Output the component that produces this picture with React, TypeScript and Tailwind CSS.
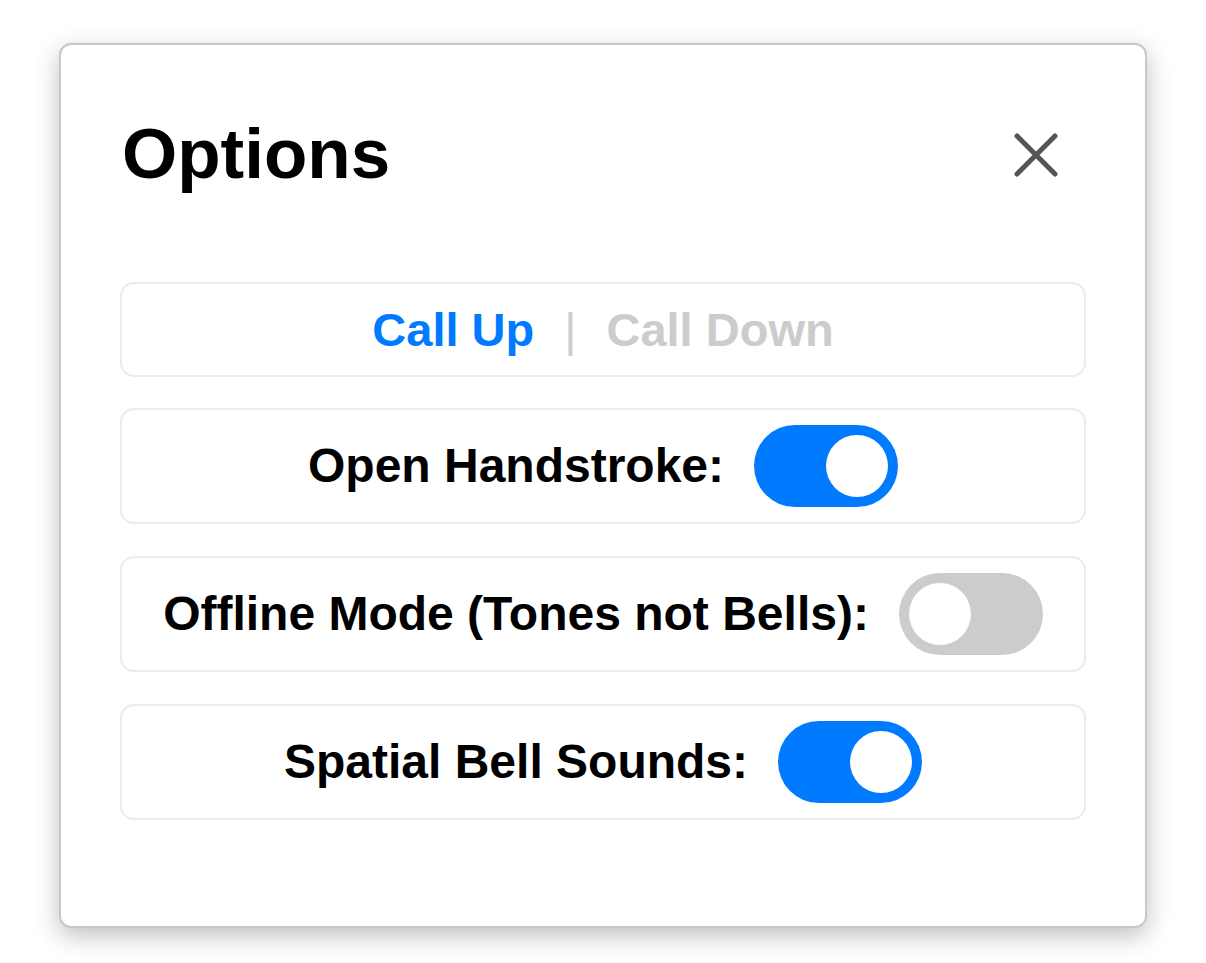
import React, { useState } from 'react';

const font = { fontFamily: '"Liberation Sans", Arial, Helvetica, sans-serif' };

type ToggleProps = { on: boolean; onChange: () => void };

const Toggle: React.FC<ToggleProps> = ({ on, onChange }) => (
  <button
    onClick={onChange}
    className={`flex h-[82px] w-[144px] shrink-0 items-center rounded-full p-[10px] ${
      on ? 'justify-end bg-[#007aff]' : 'justify-start bg-[#cccccc]'
    }`}
  >
    <span className="block h-[62px] w-[62px] rounded-full bg-white" />
  </button>
);

const OptionRow: React.FC<{ label: string; on: boolean; onChange: () => void }> = ({ label, on, onChange }) => (
  <div className="flex items-center justify-center gap-[30px] rounded-[14px] border-2 border-[#ececec] py-[15px]">
    <span className="text-[48px] font-bold leading-none text-black">{label}</span>
    <Toggle on={on} onChange={onChange} />
  </div>
);

const App: React.FC = () => {
  const [callUp, setCallUp] = useState(true);
  const [handstroke, setHandstroke] = useState(true);
  const [offline, setOffline] = useState(false);
  const [spatial, setSpatial] = useState(true);

  return (
    <div className="min-h-[963px] w-full bg-white pt-[43px]" style={font}>
      <div className="mx-auto flex w-[1088px] flex-col rounded-[12px] border-2 border-[#c8c8c8] bg-white px-[59px] pb-[106px] pt-[60px] shadow-[0_8px_24px_rgba(55,60,70,0.32)]">
        {/* header */}
        <div className="flex h-[100px] items-start justify-between">
          <h1 className="mt-[8px] pl-[2px] text-[71px] font-bold leading-[82px] text-black">Options</h1>
          <button className="flex h-[100px] w-[100px] items-center justify-center">
            <svg width="44" height="44" viewBox="0 0 44 44" fill="none" stroke="#555555" strokeWidth="5" strokeLinecap="round">
              <path d="M3 3L41 41M41 3L3 41" />
            </svg>
          </button>
        </div>

        {/* call direction */}
        <div className="mt-[77px] flex h-[95px] items-center justify-center rounded-[14px] border-2 border-[#ececec]">
          <button
            onClick={() => setCallUp(true)}
            className={`text-[47px] font-bold leading-none ${callUp ? 'text-[#007aff]' : 'text-[#cccccc]'}`}
          >
            Call Up
          </button>
          <span className="mx-[30px] text-[47px] font-normal leading-none text-[#cccccc]">|</span>
          <button
            onClick={() => setCallUp(false)}
            className={`text-[47px] font-bold leading-none ${!callUp ? 'text-[#007aff]' : 'text-[#cccccc]'}`}
          >
            Call Down
          </button>
        </div>

        <div className="mt-[31px] flex flex-col gap-[32px]">
          <OptionRow label="Open Handstroke:" on={handstroke} onChange={() => setHandstroke(!handstroke)} />
          <OptionRow label="Offline Mode (Tones not Bells):" on={offline} onChange={() => setOffline(!offline)} />
          <OptionRow label="Spatial Bell Sounds:" on={spatial} onChange={() => setSpatial(!spatial)} />
        </div>
      </div>
    </div>
  );
};

export default App;
